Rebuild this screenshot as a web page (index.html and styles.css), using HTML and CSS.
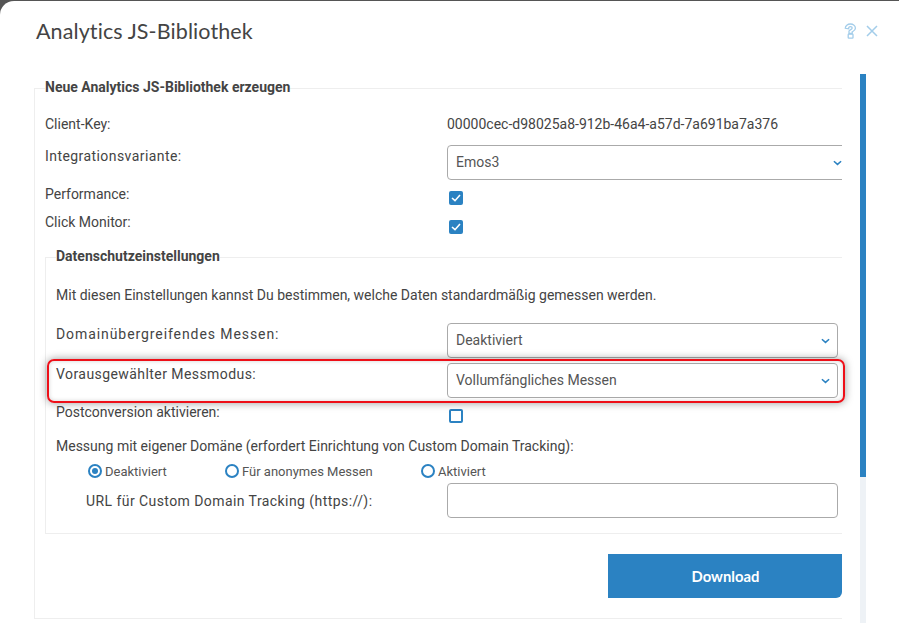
FILE: index.html
```html
<!DOCTYPE html>
<html lang="de">
<head>
<meta charset="utf-8">
<title>Analytics JS-Bibliothek</title>
<link rel="stylesheet" href="styles.css">
</head>
<body>
<div class="modal">
  <header class="head">
    <h1 class="title">Analytics JS-Bibliothek</h1>
    <div class="tools">
      <svg class="tool" width="13" height="16" viewBox="0 0 13 16" fill="none" stroke="#a3cdea" stroke-width="1.300"><path d="M1.300 5.300C1.300 2.700 3.600 1 6.400 1s5 1.800 5 4.200c0 2.200-1.900 3-3.200 3.700v1.600H5V8c0-1 3.200-1.500 3.200-2.900 0-.9-.8-1.400-1.800-1.400s-1.800.7-1.800 2.100z"/><rect x="4.200" y="11.200" width="4.800" height="4" rx=".6"/></svg>
      <svg class="tool" width="12" height="12" viewBox="0 0 12 12" fill="none" stroke="#a3cdea" stroke-width="1.500"><path d="M1 1l10 10M11 1L1 11"/></svg>
    </div>
  </header>
  <div class="viewport">
    <div class="clip">
      <fieldset class="group outer">
        <legend class="legend">Neue Analytics JS-Bibliothek erzeugen</legend>
        <div class="row row-key"><span class="label plain">Client-Key:</span><span class="value">00000cec-d98025a8-912b-46a4-a57d-7a691ba7a376</span></div>
        <div class="row row-select key-next"><span class="label">Integrationsvariante:</span>
          <div class="select wide"><span>Emos3</span><svg class="chev" width="9" height="6" viewBox="0 0 10 6" fill="none" stroke="#2b82c2" stroke-width="1.700"><path d="M1 1l4 3.600L9 1"/></svg></div></div>
        <div class="row row-check first"><span class="label plain">Performance:</span><span class="check on"><svg width="10" height="8" viewBox="0 0 10 8" fill="none" stroke="#fff" stroke-width="1.600"><path d="M1 4l3 2.700L9 1"/></svg></span></div>
        <div class="row row-check"><span class="label plain">Click Monitor:</span><span class="check on"><svg width="10" height="8" viewBox="0 0 10 8" fill="none" stroke="#fff" stroke-width="1.600"><path d="M1 4l3 2.700L9 1"/></svg></span></div>
        <fieldset class="group inner">
          <legend class="legend">Datenschutzeinstellungen</legend>
          <p class="intro">Mit diesen Einstellungen kannst Du bestimmen, welche Daten standardmäßig gemessen werden.</p>
          <div class="row row-select tight"><span class="label wider">Domainübergreifendes Messen:</span>
            <div class="select"><span>Deaktiviert</span><svg class="chev" width="9" height="6" viewBox="0 0 10 6" fill="none" stroke="#2b82c2" stroke-width="1.700"><path d="M1 1l4 3.600L9 1"/></svg></div></div>
          <div class="row row-select tight second"><span class="label">Vorausgewählter Messmodus:</span>
            <div class="select"><span>Vollumfängliches Messen</span><svg class="chev" width="9" height="6" viewBox="0 0 10 6" fill="none" stroke="#2b82c2" stroke-width="1.700"><path d="M1 1l4 3.600L9 1"/></svg></div></div>
          <div class="row row-check post"><span class="label plain">Postconversion aktivieren:</span><span class="check"></span></div>
          <div class="label plain own">Messung mit eigener Domäne (erfordert Einrichtung von Custom Domain Tracking):</div>
          <div class="radios">
            <label class="radio r1"><span class="dot sel"></span>Deaktiviert</label>
            <label class="radio r2"><span class="dot"></span>Für anonymes Messen</label>
            <label class="radio"><span class="dot"></span>Aktiviert</label>
          </div>
          <div class="row row-select tight url"><span class="label">URL für Custom Domain Tracking (https://):</span><div class="select"></div></div>
        </fieldset>
        <div class="actions"><button class="btn">Download</button></div>
      </fieldset>
    </div>
    <div class="scrollbar"><div class="thumb"></div></div>
  </div>
  <div class="mark"></div>
</div>
</body>
</html>
```
FILE: styles.css
```css
* { box-sizing: border-box; }
html, body { margin: 0; height: 100%; }
body {
  width: 899px;
  height: 623px;
  overflow: hidden;
  background: #555;
  font-family: Roboto, sans-serif;
  color: #444;
  font-size: 14px;
}
.modal {
  position: relative;
  height: 622px;
  margin-top: 1px;
  background: #fff;
  border-top-left-radius: 14px;
  overflow: hidden;
}
.head {
  height: 73px;
  padding: 16px 21px 0 36px;
  display: flex;
  justify-content: space-between;
  align-items: flex-start;
}
.title {
  margin: 0;
  font: 400 21.500px/28px Lato, sans-serif;
  letter-spacing: .1px;
  color: #444;
}
.tools { display: flex; align-items: center; gap: 9px; padding-top: 6px; }
.tool { display: block; }
.viewport { display: flex; height: 549px; padding-left: 34px; }
.clip { width: 808px; overflow: hidden; height: 549px; }
.scrollbar { margin-left: 18px; width: 6px; height: 100%; background: #eef2f6; }
.thumb { height: 403px; background: #2b82c2; }
.group {
  margin: 0;
  border: 1px solid #eee;
  padding: 0 10px;
  min-width: 0;
}
.outer { width: 830px; height: 540px; margin-top: 5px; }
.inner { width: 805px; height: 286px; margin-top: 7px; }
.legend {
  padding: 0 0 2px;
  font-weight: 700;
  font-size: 14px;
  line-height: 16px;
  color: #444;
}
.row { display: grid; grid-template-columns: 402px 1fr; }
.inner .row { grid-template-columns: 391px 391px; }
.label { color: #444; letter-spacing: .43px; font-size: 14px; line-height: 16px; }
.label.plain { letter-spacing: 0; }
.label.wider { letter-spacing: .92px; }
.row-key { height: 22px; margin-top: 16px; align-items: center; }
.value { font-size: 14px; color: #444; }
.row-select { height: 35px; margin-top: 8px; }
.row-select.key-next { margin-top: 10px; }
.row-select .label { padding-top: 3px; }
.select {
  height: 35px;
  border: 1px solid #aaa;
  border-radius: 4px;
  padding: 0 7px 2px 8px;
  display: flex;
  align-items: center;
  justify-content: space-between;
  color: #555;
  font-size: 14px;
}
.select.wide { width: 420px; padding-right: 24px; }
.chev { display: block; margin-top: 2px; }
.row-check { height: 29px; align-items: center; }
.row-check.first { margin-top: 3px; }
.row-check .label { margin-bottom: 10px; }
.row-check.first .label { margin-bottom: 8px; }
.check {
  width: 14px; height: 14px; margin-left: 2px;
  border: 2px solid #2b82c2;
  border-radius: 2px;
  display: flex; align-items: center; justify-content: center;
}
.check.on { background: #2b82c2; border: 0; }
.intro { margin: 21px 0 0; font-size: 14px; line-height: 16px; color: #444; }
.tight { margin-top: 20px; }
.tight.second { margin-top: 5px; }
.mark {
  position: absolute;
  left: 47px; top: 358px; width: 798px; height: 44px;
  border: 2px solid #ee0f18;
  border-radius: 7px;
  box-shadow: 0 0 8px rgba(0,0,0,.4), inset 0 0 4px rgba(0,0,0,.18);
}
.post { margin-top: 4px; height: 28px; }
.post .label { margin-bottom: 8px; }
.own { margin-top: 8px; }
.radios { display: flex; margin: 9px 0 0 32px; height: 16px; align-items: center; font-size: 13px; color: #555; }
.radio { display: flex; align-items: center; gap: 3px; }
.r1 { width: 137px; }
.r2 { width: 196px; }
.dot { width: 14px; height: 14px; border: 2px solid #2b82c2; border-radius: 50%; position: relative; background: #fff; }
.dot.sel::after { content: ""; position: absolute; inset: 2px; border-radius: 50%; background: #2b82c2; }
.url { margin-top: 4px; }
.url .label { padding-left: 30px; padding-top: 10px; }
.actions { display: flex; justify-content: flex-end; width: 797px; margin-top: 20px; }
.btn {
  width: 234px; height: 44px;
  padding-left: 7px;
  padding-bottom: 2px;
  background: #2b82c2;
  color: #fff;
  border: 0;
  border-bottom-right-radius: 6px;
  font: 700 14.800px Lato, sans-serif;
}
```
